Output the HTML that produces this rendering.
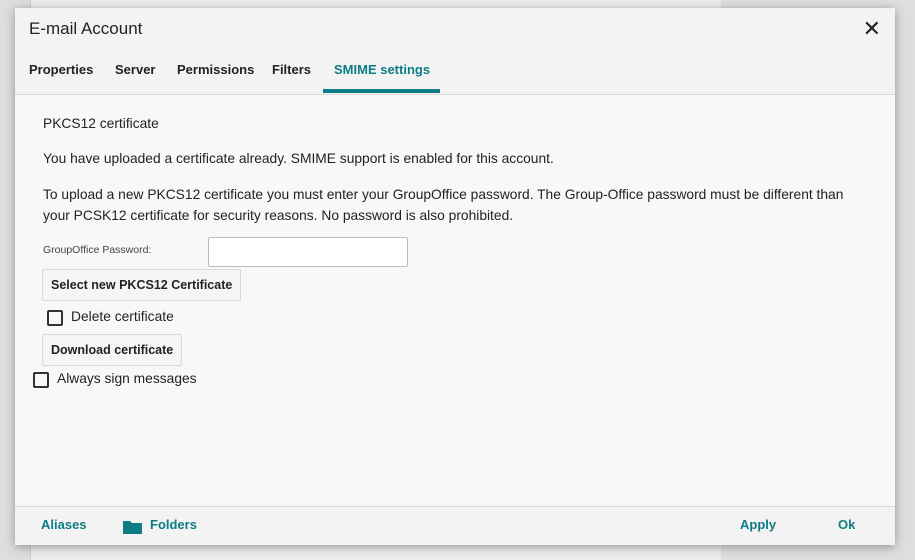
<!DOCTYPE html><html><head><style>
body{margin:0;width:915px;height:560px;background:#dedede;font-family:"Liberation Sans",sans-serif;position:relative;overflow:hidden}
.bgp{position:absolute;left:30px;top:0;width:690px;height:560px;background:#ececec;border-left:1px solid #ccc}
.dlg{position:absolute;left:15px;top:8px;width:880px;height:537px;background:#f8f8f8;box-shadow:0 2px 10px rgba(0,0,0,.35);border-radius:2px}
.hd{height:86px;background:#f3f3f3;border-bottom:1px solid #d8d8d8;position:relative}
.t{position:absolute;left:14px;top:11px;font-size:17px;color:#222}
.x{position:absolute;right:14px;top:8px;font-size:22px;color:#222}
.tab{position:absolute;top:54px;font-size:13px;font-weight:bold;color:#222}
.ul{position:absolute;left:308px;top:81px;width:117px;height:4px;background:#0d7d85}
.p{position:absolute;font-size:13.8px;color:#222}
.btn{position:absolute;background:#f5f5f5;border:1px solid #d8d8d8;border-radius:2px;font-size:12.5px;font-weight:bold;color:#222;padding:0 8px;height:30px;line-height:30px}
.cb{position:absolute;width:12px;height:12px;border:2px solid #333;border-radius:2px}
.ft{position:absolute;left:0;bottom:0;width:880px;height:38px;background:#f3f3f3;border-top:1px solid #d8d8d8}
.fl{position:absolute;top:10px;font-size:13px;font-weight:bold;color:#0d7d85}
</style></head><body>
<div class="bgp"></div>
<div class="dlg">
<div class="hd"><div class="t">E-mail Account</div><div class="x">✕</div>
<div class="tab" style="left:14px">Properties</div><div class="tab" style="left:100px">Server</div><div class="tab" style="left:162px">Permissions</div><div class="tab" style="left:257px">Filters</div><div class="tab" style="left:319px;color:#0d7d85">SMIME settings</div><div class="ul"></div></div>
<div class="p" style="left:28px;top:108px">PKCS12 certificate</div>
<div class="p" style="left:28px;top:143px">You have uploaded a certificate already. SMIME support is enabled for this account.</div>
<div class="p" style="left:28px;top:176px;width:830px;line-height:21px">To upload a new PKCS12 certificate you must enter your GroupOffice password. The Group-Office password must be different than your PCSK12 certificate for security reasons. No password is also prohibited.</div>
<div class="p" style="left:28px;top:236px;font-size:10.5px;color:#444">GroupOffice Password:</div>
<div style="position:absolute;left:193px;top:229px;width:198px;height:28px;border:1px solid #bbb;border-radius:2px;background:#fff"></div>
<div class="btn" style="left:27px;top:261px">Select new PKCS12 Certificate</div>
<div class="cb" style="left:32px;top:302px"></div><div class="p" style="left:56px;top:301px">Delete certificate</div>
<div class="btn" style="left:27px;top:326px">Download certificate</div>
<div class="cb" style="left:18px;top:364px"></div><div class="p" style="left:42px;top:363px">Always sign messages</div>
<div class="ft"><div class="fl" style="left:26px">Aliases</div>
<svg style="position:absolute;left:108px;top:12px" width="19" height="15"><path d="M0 2h7l2 2h10v11H0z" fill="#0d7d85"/></svg>
<div class="fl" style="left:135px">Folders</div><div class="fl" style="left:725px">Apply</div><div class="fl" style="left:823px">Ok</div></div>
</div>
</body></html>
